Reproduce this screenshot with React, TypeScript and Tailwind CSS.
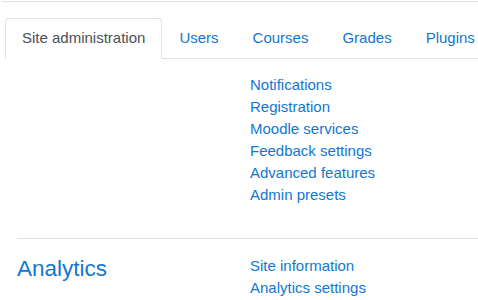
export default function App() {
  const tabs = ["Users", "Courses", "Grades", "Plugins"];
  const general = [
    "Notifications",
    "Registration",
    "Moodle services",
    "Feedback settings",
    "Advanced features",
    "Admin presets",
  ];
  const analytics = ["Site information", "Analytics settings"];

  return (
    <div className="h-[300px] w-[478px] overflow-hidden bg-white font-['Liberation_Sans',Arial,sans-serif] text-[15px]">
      <div className="ml-[2px] mt-px h-px bg-[#dee2e6]" />

      {/* tabs */}
      <ul className="mt-[16px] ml-[5px] flex whitespace-nowrap border-b border-[#dee2e6]">
        <li className="-mb-px rounded-t-[4px] border border-[#dee2e6] border-b-white bg-white px-4 py-2 leading-[22px] text-[#495057]">
          Site administration
        </li>
        {tabs.map((t) => (
          <li key={t} className="border border-transparent px-4 py-2 leading-[22px] text-[#1177d1]">
            {t}
          </li>
        ))}
      </ul>

      {/* general */}
      <div className="ml-[17px] flex pt-[15px] pb-[32px]">
        <div className="w-[233px]" />
        <ul className="leading-[22px] text-[#1177d1]">
          {general.map((l) => (
            <li key={l}>{l}</li>
          ))}
        </ul>
      </div>

      {/* analytics */}
      <div className="ml-[17px] flex border-t border-[#dee2e6] pt-[16px]">
        <h4 className="w-[233px] text-[22.5px] leading-[27px] text-[#1177d1]">Analytics</h4>
        <ul className="leading-[22px] text-[#1177d1]">
          {analytics.map((l) => (
            <li key={l}>{l}</li>
          ))}
        </ul>
      </div>
    </div>
  );
}
